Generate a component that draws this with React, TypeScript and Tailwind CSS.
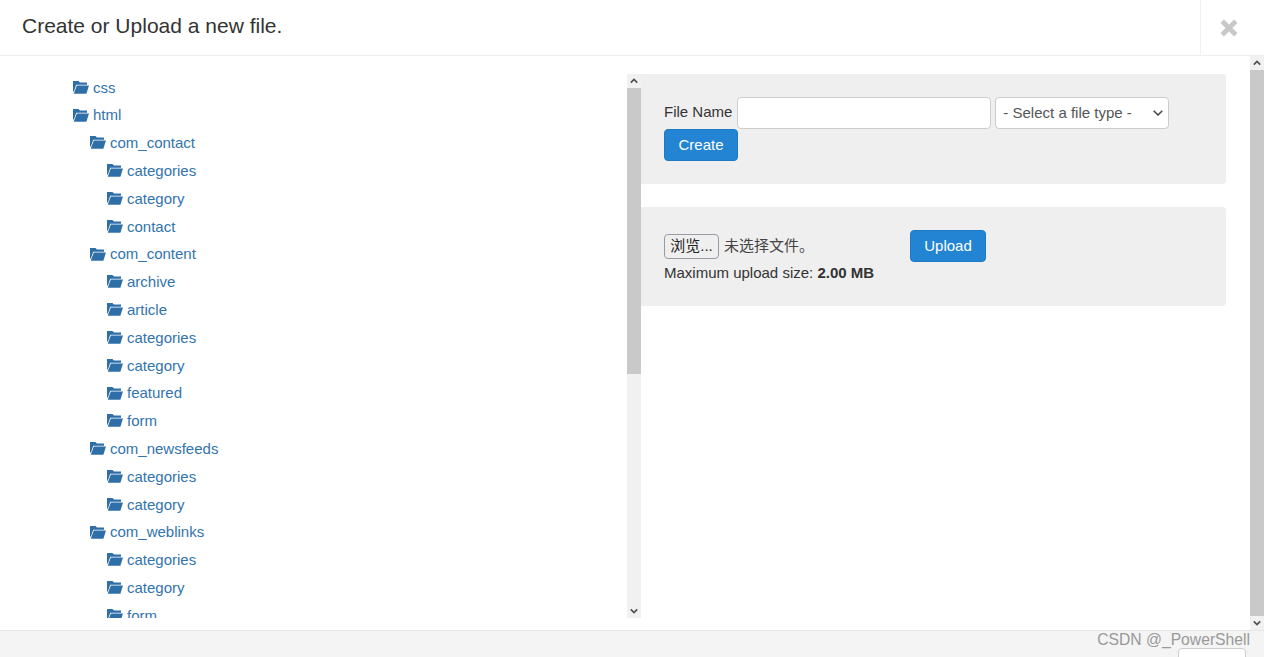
import React from "react";

function Folder() {
  return (
    <svg width="16" height="13" viewBox="0 0 16 13" className="shrink-0 mr-[4px] -mt-[1px]" fill="#2f6fa8">
      <path d="M0 0h5.5l1.5 1.5H14v2.2H3.2L0.9 10.5H0z" />
      <path d="M3.8 4.5H16l-2.6 8.2H0.7z" />
    </svg>
  );
}

const rows: [number, string][] = [
  [0, "css"], [0, "html"], [1, "com_contact"], [2, "categories"], [2, "category"], [2, "contact"],
  [1, "com_content"], [2, "archive"], [2, "article"], [2, "categories"], [2, "category"], [2, "featured"], [2, "form"],
  [1, "com_newsfeeds"], [2, "categories"], [2, "category"],
  [1, "com_weblinks"], [2, "categories"], [2, "category"], [2, "form"],
];

const indent = ["pl-[73px]", "pl-[90px]", "pl-[107px]"];

function Scrollbar({ thumbClass }: { thumbClass: string }) {
  return (
    <div className="w-[14px] shrink-0 flex flex-col bg-[#f1f1f1]">
      <div className="h-[14px] flex items-center justify-center">
        <svg width="8" height="6" viewBox="0 0 8 6"><path d="M0.8 4.6 4 1.4l3.2 3.2" fill="none" stroke="#505050" strokeWidth="1.7" /></svg>
      </div>
      <div className={`bg-[#c9c9c9] ${thumbClass}`} />
      <div className="flex-1" />
      <div className="h-[14px] flex items-center justify-center">
        <svg width="8" height="6" viewBox="0 0 8 6"><path d="M0.8 1.4 4 4.6l3.2-3.2" fill="none" stroke="#505050" strokeWidth="1.7" /></svg>
      </div>
    </div>
  );
}

export default function App() {
  return (
    <div className="relative w-[1264px] h-[657px] overflow-hidden bg-white flex flex-col font-['Liberation_Sans','Noto_Sans_CJK_SC',sans-serif] text-[15px] text-[#333]">
      <header className="h-[56px] shrink-0 flex border-b border-[#eeeeee]">
        <h1 className="flex-1 pl-[22px] pt-[14px] text-[21px] leading-[24px] font-normal text-[#333]">Create or Upload a new file.</h1>
        <div className="w-[64px] border-l border-[#f0f0f0] flex items-center pl-[19px]">
          <svg width="18" height="18" viewBox="0 0 18 18"><path d="M2.2 2.2l13.6 13.6M15.8 2.2 2.2 15.8" stroke="#c8c8c8" strokeWidth="4.8" /></svg>
        </div>
      </header>

      <main className="flex-1 min-h-0 flex">
        <div className="flex-1 min-w-0 flex pt-[18px] pb-[12px]">
          <div className="w-[627px] shrink-0 overflow-hidden">
            {rows.map(([lvl, name], i) => (
              <div key={i} className={`h-[27.8px] flex items-center text-[#3274ad] ${indent[lvl]}`}>
                <Folder />
                <span>{name}</span>
              </div>
            ))}
          </div>
          <Scrollbar thumbClass="h-[286px]" />
          <div className="flex-1 min-w-0 pr-[24px]">
            <section className="h-[110px] bg-[#efefef] rounded-r-[4px] pl-[23px] pr-[20px] pt-[23px]">
              <div className="flex items-start">
                <label className="leading-[30px] mr-[5px]">File Name</label>
                <input className="w-[254px] h-[32px] bg-white border border-[#cccccc] rounded-[4px] mr-[4px] outline-none" />
                <div className="relative w-[174px] h-[32px]">
                  <select className="appearance-none w-full h-full bg-white border border-[#cccccc] rounded-[4px] pl-[7px] text-[#555]">
                    <option>- Select a file type -</option>
                  </select>
                  <svg width="10" height="6" viewBox="0 0 10 6" className="absolute right-[6px] top-[13px]"><path d="M0.7 0.7 5 5l4.3-4.3" fill="none" stroke="#444" strokeWidth="1.5" /></svg>
                </div>
              </div>
              <button className="block w-[74px] h-[32px] bg-[#2384d3] border border-[#1f79c4] rounded-[4px] text-white text-center">Create</button>
            </section>
            <section className="h-[99px] mt-[23px] bg-[#efefef] rounded-r-[4px] pl-[23px] pt-[23px]">
              <div className="flex items-center h-[32px]">
                <span className="w-[55px] h-[25px] bg-[#efefef] border border-[#9a9aa5] rounded-[4px] flex items-center justify-center text-[#222]">浏览...</span>
                <span className="ml-[5px] w-[186px] text-[#444]">未选择文件。</span>
                <button className="w-[76px] h-[32px] bg-[#2384d3] border border-[#1f79c4] rounded-[4px] text-white text-center">Upload</button>
              </div>
              <p className="leading-[21px]">Maximum upload size: <strong>2.00 MB</strong></p>
            </section>
          </div>
        </div>
        <Scrollbar thumbClass="flex-[0_0_546px]" />
      </main>

      <footer className="h-[27px] shrink-0 bg-[#f4f4f4] border-t border-[#e6e6e6] flex justify-end pr-[18px] pt-[17px]">
        <div className="w-[68px] h-[24px] bg-white border border-[#cccccc] rounded-[4px]" />
      </footer>

      <div className="absolute right-[14px] bottom-[8px] text-[15.7px] leading-[19px] text-[#999999]">CSDN @_PowerShell</div>
    </div>
  );
}
